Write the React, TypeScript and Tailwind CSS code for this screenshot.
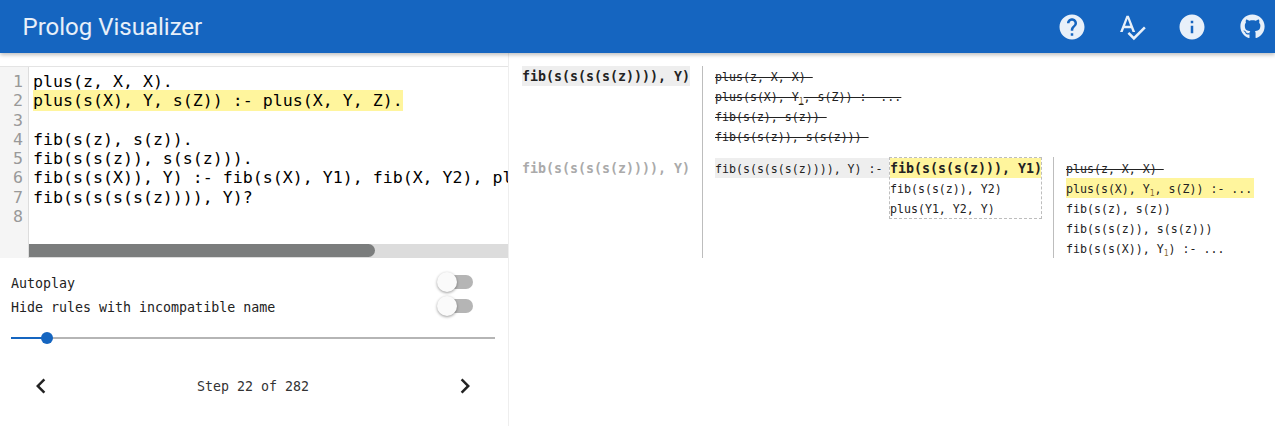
import { MdHelp, MdSpellcheck, MdInfo, MdChevronLeft, MdChevronRight } from "react-icons/md";
import { FaGithub } from "react-icons/fa";

const mono = "[font-family:'DejaVu_Sans_Mono',monospace]";

function Sub() {
  return <sub className="text-[8px] leading-none align-[-1px] text-[#8a6a30]">1</sub>;
}

function Rule({ children, struck, hl }: { children: React.ReactNode; struck?: boolean; hl?: boolean }) {
  return (
    <div className={`h-5 leading-[22px] whitespace-pre text-[11.6px] text-[#222] ${struck ? "line-through" : ""} ${hl ? "bg-[#fff59d]" : ""}`}>
      {children}
    </div>
  );
}

function Toggle() {
  return (
    <div className="relative w-[34px] h-[14px] rounded-full bg-[#b5b5b5] mr-[22px] mb-[2px]">
      <div className="absolute left-[-2px] top-[-3px] w-5 h-5 rounded-full bg-[#fafafa] shadow-[0_1px_3px_rgba(0,0,0,0.4)]" />
    </div>
  );
}

const lines: React.ReactNode[] = [
  "plus(z, X, X).",
  <span className="bg-[#fff59d] py-px">plus(s(X), Y, s(Z)) :- plus(X, Y, Z).</span>,
  "",
  "fib(s(z), s(z)).",
  "fib(s(s(z)), s(s(z))).",
  "fib(s(s(X)), Y) :- fib(s(X), Y1), fib(X, Y2), plus(Y1, Y2, Y).",
  "fib(s(s(s(s(z)))), Y)?",
  "",
];

export default function App() {
  return (
    <div className={`w-[1275px] h-[426px] overflow-hidden bg-white ${mono}`}>
      <header className="h-[53px] bg-[#1565c0] flex items-center pl-[22.5px] shadow-[0_2px_4px_rgba(0,0,0,0.25)] relative text-white/90">
        <h1 className="text-[24px] leading-[56px] font-normal [font-family:Roboto,sans-serif] flex-1">Prolog Visualizer</h1>
        <div className="flex items-center gap-[30px] pr-2">
          <MdHelp size={30} />
          <MdSpellcheck size={30} />
          <MdInfo size={30} />
          <FaGithub size={25} className="mx-[2.5px]" />
        </div>
      </header>

      <div className="flex h-[373px]">
        <aside className="w-[509px] border-r border-[#eeeeee] pt-[13px] shrink-0">
          <div className="h-[192px] border-t border-[#e4e4e4] flex">
            <div className="w-[29px] bg-[#f5f5f5] border-r border-[#dddddd] text-right pr-[5px] pt-[5px] text-[#999] text-[16.6px] leading-[19.3px] shrink-0">
              {lines.map((_, i) => (
                <div key={i}>{i + 1}</div>
              ))}
            </div>
            <div className="flex-1 min-w-0 flex flex-col">
              <div className="flex-1 min-h-0 overflow-hidden pl-1 pt-[5px] text-[16.6px] leading-[19.3px] text-black whitespace-pre">
                {lines.map((l, i) => (
                  <div key={i} className="h-[19.3px]">{l}</div>
                ))}
              </div>
              <div className="h-[14px] bg-[#dcdcdc] shrink-0">
                <div className="h-[13px] w-[346px] bg-[#7b7d7d] rounded-r-full" />
              </div>
            </div>
          </div>

          <div className="pl-[11px] pr-[13px] text-[13.3px] text-[#222]">
            <div className="flex items-center justify-between h-6 mt-[13px]">
              <span className="mt-px">Autoplay</span>
              <Toggle />
            </div>
            <div className="flex items-center justify-between h-6">
              <span className="mt-px">Hide rules with incompatible name</span>
              <Toggle />
            </div>
            <div className="relative h-[2px] bg-[#b5b5b5] mt-[18px]">
              <div className="h-full w-9 bg-[#1565c0]" />
              <div className="absolute left-[30px] top-[-5px] w-3 h-3 rounded-full bg-[#1565c0]" />
            </div>
            <div className="flex items-center justify-between mt-[35px] h-6 pl-[15px] pr-[15px] text-[#333]">
              <MdChevronLeft size={30} className="text-[#222]" />
              <span className="mt-[2px]">Step 22 of 282</span>
              <MdChevronRight size={30} className="text-[#222]" />
            </div>
          </div>
        </aside>

        <main className="pl-[13px] pt-[13px] flex-1">
          <div className="flex">
            <div className="w-[168px] h-5 leading-[22px] bg-[#eeeeee] text-[13.3px] font-bold text-[#222] mr-3 whitespace-pre">fib(s(s(s(s(z)))), Y)</div>
            <div className="border-l border-[#bdbdbd] pl-3 h-[91px]">
              <Rule struck>plus(z, X, X) </Rule>
              <Rule struck>plus(s(X), Y<Sub />, s(Z)) :- ...</Rule>
              <Rule struck>fib(s(z), s(z)) </Rule>
              <Rule struck>fib(s(s(z)), s(s(z))) </Rule>
            </div>
          </div>
          <div className="flex">
            <div className="w-[168px] h-5 mt-px leading-[22px] text-[13.3px] font-bold text-[#aaaaaa] mr-3 whitespace-pre">fib(s(s(s(s(z)))), Y)</div>
            <div className="border-l border-[#bdbdbd] pl-3 h-[101px] flex items-start">
              <div className="h-5 mt-px leading-[22px] bg-[#eeeeee] text-[11.6px] text-[#222] whitespace-pre w-[174px]">fib(s(s(s(s(z)))), Y) :-</div>
              <div className="border border-dashed border-[#bdbdbd] w-[153px] h-[62px] shrink-0">
                <div className="h-5 leading-[22px] bg-[#fff59d] text-[13.3px] font-bold text-[#222] whitespace-pre">fib(s(s(s(z))), Y1)</div>
                <div className="h-5 leading-[22px] text-[11.6px] text-[#222] whitespace-pre">fib(s(s(z)), Y2)</div>
                <div className="h-5 leading-[22px] text-[11.6px] text-[#222] whitespace-pre">plus(Y1, Y2, Y)</div>
              </div>
              <div className="border-l border-[#bdbdbd] ml-[11px] pl-3 h-[101px] pt-px w-[201px]">
                <Rule struck>plus(z, X, X) </Rule>
                <Rule hl>plus(s(X), Y<Sub />, s(Z)) :- ...</Rule>
                <Rule>fib(s(z), s(z))</Rule>
                <Rule>fib(s(s(z)), s(s(z)))</Rule>
                <Rule>fib(s(s(X)), Y<Sub />) :- ...</Rule>
              </div>
            </div>
          </div>
        </main>
      </div>
    </div>
  );
}
